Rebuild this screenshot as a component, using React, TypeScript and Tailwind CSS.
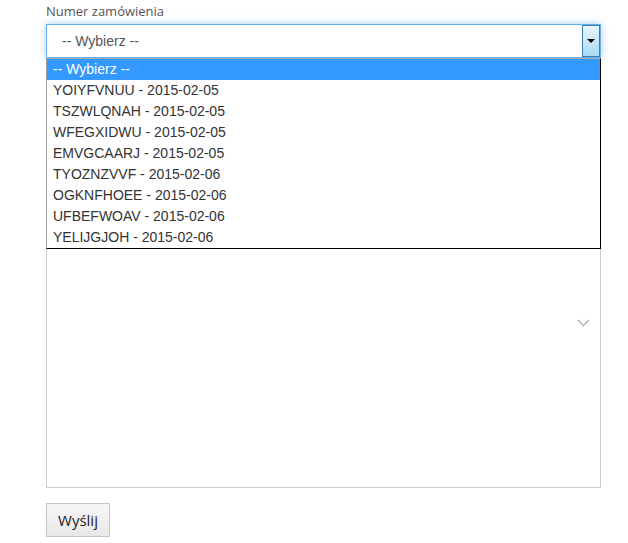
import React from "react";

const options = [
  "YOIYFVNUU - 2015-02-05",
  "TSZWLQNAH - 2015-02-05",
  "WFEGXIDWU - 2015-02-05",
  "EMVGCAARJ - 2015-02-05",
  "TYOZNZVVF - 2015-02-06",
  "OGKNFHOEE - 2015-02-06",
  "UFBEFWOAV - 2015-02-06",
  "YELIJGJOH - 2015-02-06",
];

export default function App() {
  return (
    <div className="w-[628px] h-[543px] bg-white pl-[46px] pt-[2px]">
      <div className="w-[555px]">
        <label className="block h-[22px] text-[13px] leading-[18px] text-[#555] [font-family:'Open_Sans',sans-serif]">
          Numer zamówienia
        </label>
        <div className="relative">
          <div className="relative h-[34px] border border-[#66afe9] bg-white shadow-[0_0_8px_rgba(102,175,233,0.6)] flex items-center pl-[15px] text-[14px] text-[#555] [font-family:'Liberation_Sans',Arial,sans-serif]">
            -- Wybierz --
            <div className="absolute right-0 top-0 bottom-0 w-[18px] border border-[#3c7fb1] bg-gradient-to-b from-[#eaf6fd] to-[#a7d9f5] flex items-center justify-center">
              <svg width="8" height="4" viewBox="0 0 8 4">
                <polygon points="0,0 8,0 4,4" fill="#000" />
              </svg>
            </div>
          </div>
          <div className="h-[430px] border border-[#ccc] border-t-0 bg-white flex items-start justify-end pr-[10px] pt-[261px]">
            <svg width="13" height="8" viewBox="0 0 13 8">
              <polyline points="1,1 6.5,6.5 12,1" fill="none" stroke="#b3b3b3" strokeWidth="1.5" />
            </svg>
          </div>
          <div className="absolute left-0 top-[34px] w-[555px] bg-white border-t border-t-[#a9a9a9] border-l border-l-[#a0a0a0] border-r border-r-black border-b border-b-black text-[14px] text-[#333] [font-family:'Liberation_Sans',Arial,sans-serif]">
            <div className="h-[21px] leading-[21px] pl-[6px] bg-[#3399ff] text-white">-- Wybierz --</div>
            {options.map((o) => (
              <div key={o} className="h-[21px] leading-[21px] pl-[6px]">
                {o}
              </div>
            ))}
          </div>
        </div>
        <button className="mt-[15px] h-[34px] w-[64px] border border-[#c5c5c5] bg-gradient-to-b from-[#f6f6f6] to-[#e8e8e8] text-[15px] text-[#222] [font-family:'Open_Sans',sans-serif]">
          Wyślij
        </button>
      </div>
    </div>
  );
}
